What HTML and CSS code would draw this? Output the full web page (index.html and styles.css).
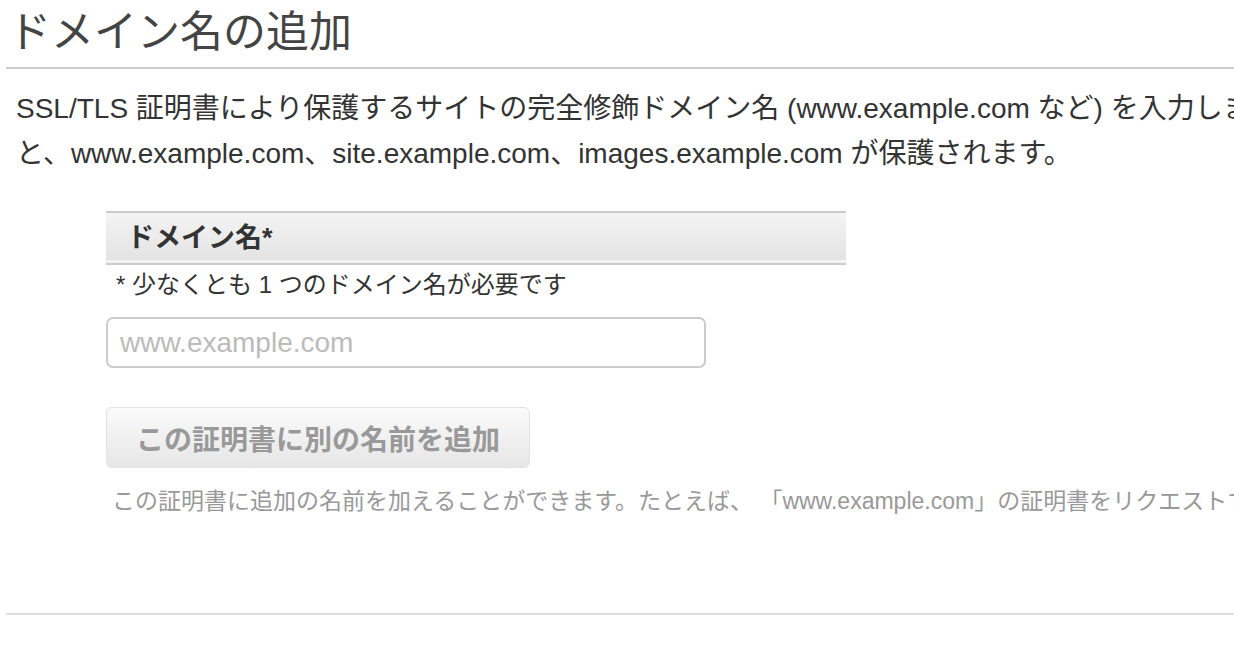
FILE: index.html
```html
<!DOCTYPE html>
<html lang="ja">
<head>
    <meta charset="UTF-8">
    <meta name="viewport" content="width=device-width, initial-scale=1.0">
    <title>ドメイン名の追加</title>
    <link rel="stylesheet" href="styles.css">
</head>
<body>

    <div class="page">
        <!-- Page title -->
        <h1 class="page-title">ドメイン名の追加</h1>

        <!-- Intro text, runs past the right edge like the console does -->
        <p class="intro">
            SSL/TLS 証明書により保護するサイトの完全修飾ドメイン名 (www.example.com など) を入力します。アスタリスク (*) を使用して、同じドメイン内の複数のサイトを保護するワイルドカード証明書をリクエストできます。たとえば、*.example.com を使用する<br>
            と、www.example.com、site.example.com、images.example.com が保護されます。
        </p>

        <!-- Domain name form -->
        <div class="domain-form">
            <div class="field-head">ドメイン名*</div>
            <div class="field-note">* 少なくとも 1 つのドメイン名が必要です</div>

            <input class="domain-input" type="text" placeholder="www.example.com">

            <div>
                <button class="add-btn" disabled>この証明書に別の名前を追加</button>
            </div>

            <p class="help">この証明書に追加の名前を加えることができます。たとえば、 「www.example.com」の証明書をリクエストする場合、「example.com」という名前を追加して、どちらの名前でもアクセスできるようにします。</p>
        </div>

        <div class="divider"></div>
    </div>

</body>
</html>
```

FILE: styles.css
```css
body {
    margin: 0;
    padding: 0;
    background-color: #fff;
    color: #333;
    font-family: "Liberation Sans", "Noto Sans CJK JP", sans-serif;
    overflow: hidden;
}

.page {
    padding-left: 6px;
    width: 1228px;
    overflow: hidden;
}

.page-title {
    margin: 0;
    padding: 5px 0 8px 2px;
    font-size: 43px;
    font-weight: normal;
    line-height: 54px;
    color: #444;
    border-bottom: 2px solid #ccc;
}

.intro {
    margin: 0;
    padding: 17px 0 0 10px;
    font-size: 28px;
    line-height: 45px;
    white-space: nowrap;
    color: #333;
}

.domain-form {
    margin: 35px 0 0 100px;
}

.field-head {
    box-sizing: border-box;
    width: 740px;
    height: 54px;
    padding-left: 21px;
    border-top: 2px solid #ccc;
    border-bottom: 2px solid #ccc;
    background: linear-gradient(#f4f4f4, #e2e2e2);
    box-shadow: inset 0 -3px 0 #f2f2f2;
    font-size: 27px;
    font-weight: bold;
    line-height: 50px;
    color: #333;
}

.field-note {
    margin: 4px 0 0 10px;
    font-size: 24px;
    line-height: 32px;
    color: #333;
}

.domain-input {
    display: block;
    box-sizing: border-box;
    width: 600px;
    height: 51px;
    margin-top: 16px;
    padding: 0 12px;
    border: 2px solid #ccc;
    border-radius: 7px;
    font-family: inherit;
    font-size: 28px;
    color: #333;
    outline: none;
}

.domain-input::placeholder {
    color: #bbb;
}

.add-btn {
    box-sizing: border-box;
    width: 424px;
    height: 61px;
    margin-top: 39px;
    border: 1px solid #e3e3e3;
    border-radius: 6px;
    background: linear-gradient(#fbfbfb, #e6e6e6);
    font-family: inherit;
    font-size: 28px;
    font-weight: bold;
    color: #999;
}

.help {
    margin: 17px 0 0 6px;
    font-size: 23px;
    line-height: 32px;
    white-space: nowrap;
    color: #999;
}

.divider {
    height: 2px;
    margin-top: 96px;
    background-color: #ddd;
}
```
